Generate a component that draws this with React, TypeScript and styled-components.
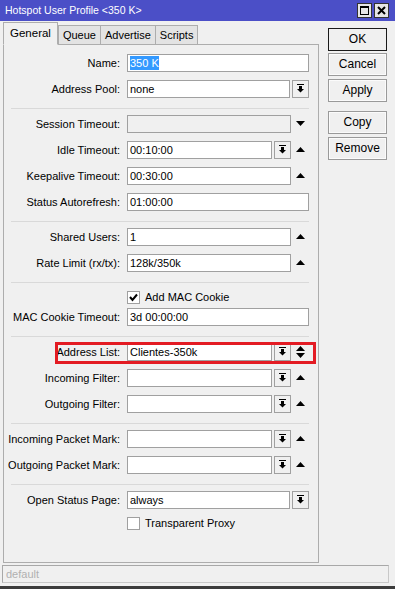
import React from "react";
import styled, { createGlobalStyle } from "styled-components";

const Global = createGlobalStyle`
  html, body { margin: 0; padding: 0; background: #f0f0f0; }
  body { font-family: "Liberation Sans", Arial, sans-serif; font-size: 11px; color: #000; }
  * { box-sizing: border-box; }
`;

const Window = styled.div`
  width: 395px;
  height: 589px;
  background: #f0f0f0;
  display: flex;
  flex-direction: column;
  border-bottom: 3px solid #3c3c3c;
  overflow: hidden;
`;

const TitleBar = styled.div`
  height: 22px;
  background: #4b4fc7;
  display: flex;
  align-items: center;
  padding: 0 6px 0 5px;
  color: #fff;
  font-size: 10.5px;
`;

const TitleText = styled.div`
  flex: 1;
`;

const TitleButtons = styled.div`
  display: flex;
  gap: 2px;
`;

const TitleBtn = styled.div`
  width: 15px;
  height: 15px;
  background: #e6e6e6;
  border: 1px solid #333;
  display: flex;
  align-items: center;
  justify-content: center;
`;

const Body = styled.div`
  flex: 1;
  display: flex;
  padding: 1px 0 0 3px;
`;

const LeftCol = styled.div`
  width: 316px;
  display: flex;
  flex-direction: column;
`;

const TabStrip = styled.div`
  display: flex;
  align-items: flex-end;
  height: 22px;
  padding-left: 2px;
  position: relative;
  z-index: 1;
`;

const Tab = styled.div<{ $active?: boolean }>`
  height: 19px;
  padding: 0 4px;
  margin-right: -1px;
  display: flex;
  align-items: center;
  justify-content: center;
  border: 1px solid #adadad;
  border-bottom: none;
  background: #e3e3e3;
  font-size: 11px;
  ${(p) =>
    p.$active
      ? `margin-left: -2px; margin-right: 0; margin-bottom: -1px; height: 23px;
         padding: 0 6px; background: #f0f0f0; border-bottom: 1px solid #f0f0f0; font-size: 11.5px;`
      : ""}
`;

const Panel = styled.div`
  height: 519px;
  border: 1px solid #adadad;
  display: flex;
  flex-direction: column;
  gap: 8px;
  padding: 9px 0 0 0;
`;

const Row = styled.div`
  position: relative;
  display: grid;
  grid-template-columns: 116px 182px;
  column-gap: 7px;
  align-items: center;
  height: 18px;
`;

const Label = styled.div`
  text-align: right;
  white-space: nowrap;
`;

const Control = styled.div`
  display: flex;
  align-items: center;
  height: 18px;
`;

const Field = styled.div<{ $disabled?: boolean }>`
  flex: 1;
  height: 18px;
  border: 1px solid #a0a0a0;
  background: ${(p) => (p.$disabled ? "#f0f0f0" : "#fff")};
  padding: 0 2px;
  display: flex;
  align-items: center;
  white-space: nowrap;
  overflow: hidden;
`;

const Selected = styled.span`
  background: #3399ff;
  color: #fff;
  padding: 1px 0;
`;

const DropBtn = styled.div`
  width: 17px;
  height: 18px;
  margin-left: 2px;
  border: 1px solid #a0a0a0;
  background: #f0f0f0;
  display: flex;
  align-items: center;
  justify-content: center;
`;

const ArrowSlot = styled.div`
  width: 18px;
  height: 18px;
  display: flex;
  align-items: center;
  justify-content: center;
`;

const Separator = styled.div`
  height: 1px;
  background: #d9d9d9;
  margin: 2px 9px -2px 7px;
`;

const CheckRow = styled.div<{ $mt?: number; $mb?: number }>`
  display: flex;
  align-items: center;
  gap: 5px;
  height: 13px;
  padding-left: 123px;
  margin-top: ${(p) => p.$mt ?? 0}px;
  margin-bottom: ${(p) => p.$mb ?? 0}px;
`;

const CheckBox = styled.div`
  width: 13px;
  height: 13px;
  border: 1px solid #a0a0a0;
  background: #fff;
  display: flex;
  align-items: center;
  justify-content: center;
`;

const Highlight = styled.div`
  position: absolute;
  left: 51px;
  top: -1px;
  width: 261px;
  height: 22px;
  border: 3px solid #e31b23;
  pointer-events: none;
`;

const RightCol = styled.div`
  display: flex;
  flex-direction: column;
  padding: 6px 0 0 9px;
`;

const Button = styled.div<{ $default?: boolean; $gapTop?: number }>`
  width: 59px;
  height: 23px;
  margin-top: ${(p) => p.$gapTop ?? 0}px;
  border: 1px solid ${(p) => (p.$default ? "#1a1a1a" : "#9a9a9a")};
  box-shadow: inset 0 0 0 1px ${(p) => (p.$default ? "#f0f0f0" : "#fbfbfb")};
  background: #f0f0f0;
  display: flex;
  align-items: center;
  justify-content: center;
  font-size: 12px;
`;

const StatusBar = styled.div`
  height: 19px;
  margin: 2px 6px 3px 2px;
  border: 1px solid #c8c8c8;
  border-top-color: #a8a8a8;
  border-left-color: #a8a8a8;
  color: #b0b0b0;
  padding-left: 3px;
  display: flex;
  align-items: center;
`;

const DropIcon = () => (
  <svg width="7" height="9" viewBox="0 0 7 9">
    <rect x="0" y="0" width="7" height="1" fill="#000" />
    <rect x="2" y="2" width="3" height="3" fill="#000" />
    <polygon points="0,5 7,5 3.5,8.5" fill="#000" />
  </svg>
);

const UpIcon = () => (
  <svg width="9" height="5" viewBox="0 0 9 5">
    <polygon points="0,5 4.5,0 9,5" fill="#000" />
  </svg>
);

const DownIcon = () => (
  <svg width="9" height="5" viewBox="0 0 9 5">
    <polygon points="0,0 9,0 4.5,5" fill="#000" />
  </svg>
);

const UpDownIcon = () => (
  <svg width="9" height="12" viewBox="0 0 9 12">
    <polygon points="0,5 4.5,0 9,5" fill="#000" />
    <polygon points="0,7 9,7 4.5,12" fill="#000" />
  </svg>
);

const CheckMark = () => (
  <svg width="9" height="9" viewBox="0 0 9 9">
    <polyline points="1,4 3.5,7 8,1.5" fill="none" stroke="#000" strokeWidth="2" />
  </svg>
);

type Arrow = "up" | "down" | "updown" | undefined;

const FormRow = ({
  label,
  value,
  drop,
  arrow,
  disabled,
  selected,
  highlight,
}: {
  label: string;
  value?: string;
  drop?: boolean;
  arrow?: Arrow;
  disabled?: boolean;
  selected?: boolean;
  highlight?: boolean;
}) => (
  <Row>
    <Label>{label}</Label>
    <Control>
      <Field $disabled={disabled}>{selected ? <Selected>{value}</Selected> : value}</Field>
      {drop && (
        <DropBtn>
          <DropIcon />
        </DropBtn>
      )}
      {arrow && (
        <ArrowSlot>
          {arrow === "up" ? <UpIcon /> : arrow === "down" ? <DownIcon /> : <UpDownIcon />}
        </ArrowSlot>
      )}
    </Control>
    {highlight && <Highlight />}
  </Row>
);

export default function App() {
  return (
    <Window>
      <Global />
      <TitleBar>
        <TitleText>Hotspot User Profile &lt;350 K&gt;</TitleText>
        <TitleButtons>
          <TitleBtn>
            <svg width="9" height="9" viewBox="0 0 9 9">
              <rect x="0.5" y="0.5" width="8" height="8" fill="none" stroke="#000" />
              <rect x="0" y="0" width="9" height="2" fill="#000" />
            </svg>
          </TitleBtn>
          <TitleBtn>
            <svg width="9" height="9" viewBox="0 0 9 9">
              <path d="M1 1 L8 8 M8 1 L1 8" stroke="#000" strokeWidth="2" />
            </svg>
          </TitleBtn>
        </TitleButtons>
      </TitleBar>
      <Body>
        <LeftCol>
          <TabStrip>
            <Tab $active>General</Tab>
            <Tab>Queue</Tab>
            <Tab>Advertise</Tab>
            <Tab>Scripts</Tab>
          </TabStrip>
          <Panel>
            <FormRow label="Name:" value="350 K" selected />
            <FormRow label="Address Pool:" value="none" drop />
            <Separator />
            <FormRow label="Session Timeout:" disabled arrow="down" />
            <FormRow label="Idle Timeout:" value="00:10:00" drop arrow="up" />
            <FormRow label="Keepalive Timeout:" value="00:30:00" arrow="up" />
            <FormRow label="Status Autorefresh:" value="01:00:00" />
            <Separator />
            <FormRow label="Shared Users:" value="1" arrow="up" />
            <FormRow label="Rate Limit (rx/tx):" value="128k/350k" arrow="up" />
            <Separator />
            <CheckRow $mt={2} $mb={-4}>
              <CheckBox>
                <CheckMark />
              </CheckBox>
              <span>Add MAC Cookie</span>
            </CheckRow>
            <FormRow label="MAC Cookie Timeout:" value="3d 00:00:00" />
            <Separator />
            <FormRow label="Address List:" value="Clientes-350k" drop arrow="updown" highlight />
            <FormRow label="Incoming Filter:" drop arrow="up" />
            <FormRow label="Outgoing Filter:" drop arrow="up" />
            <Separator />
            <FormRow label="Incoming Packet Mark:" drop arrow="up" />
            <FormRow label="Outgoing Packet Mark:" drop arrow="up" />
            <Separator />
            <FormRow label="Open Status Page:" value="always" drop />
            <CheckRow>
              <CheckBox />
              <span>Transparent Proxy</span>
            </CheckRow>
          </Panel>
        </LeftCol>
        <RightCol>
          <Button $default>OK</Button>
          <Button $gapTop={2}>Cancel</Button>
          <Button $gapTop={3}>Apply</Button>
          <Button $gapTop={9}>Copy</Button>
          <Button $gapTop={3}>Remove</Button>
        </RightCol>
      </Body>
      <StatusBar>default</StatusBar>
    </Window>
  );
}
